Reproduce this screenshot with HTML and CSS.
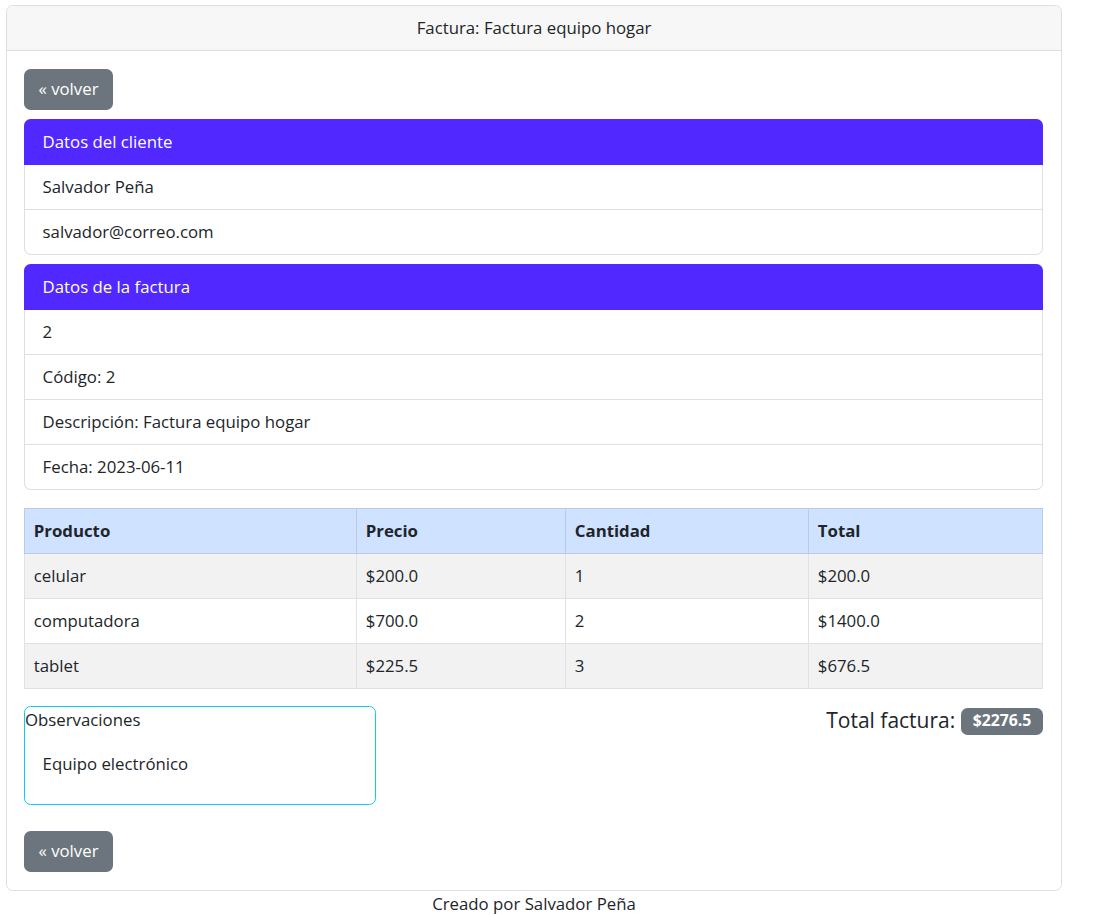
FILE: index.html
```html
<!DOCTYPE html>
<html lang="es">
<head>
<meta charset="utf-8">
<title>Factura</title>
<link rel="stylesheet" href="styles.css">
</head>
<body>
<div class="page">
  <div class="card main">
    <div class="card-header main-header">Factura: Factura equipo hogar</div>
    <div class="card-body main-body">
      <a class="btn" href="#">« volver</a>

      <div class="card info">
        <div class="info-header">Datos del cliente</div>
        <ul class="list">
          <li>Salvador Peña</li>
          <li>salvador@correo.com</li>
        </ul>
      </div>

      <div class="card info">
        <div class="info-header">Datos de la factura</div>
        <ul class="list">
          <li>2</li>
          <li>Código: 2</li>
          <li>Descripción: Factura equipo hogar</li>
          <li>Fecha: 2023-06-11</li>
        </ul>
      </div>

      <table class="items">
        <colgroup>
          <col class="c1">
          <col class="c2">
          <col class="c3">
          <col>
        </colgroup>
        <thead>
          <tr><th>Producto</th><th>Precio</th><th>Cantidad</th><th>Total</th></tr>
        </thead>
        <tbody>
          <tr><td>celular</td><td>$200.0</td><td>1</td><td>$200.0</td></tr>
          <tr><td>computadora</td><td>$700.0</td><td>2</td><td>$1400.0</td></tr>
          <tr><td>tablet</td><td>$225.5</td><td>3</td><td>$676.5</td></tr>
        </tbody>
      </table>

      <div class="summary">
        <div class="obs">
          <div class="obs-title">Observaciones</div>
          <div class="obs-body">Equipo electrónico</div>
        </div>
        <h5 class="total">Total factura: <span class="badge">$2276.5</span></h5>
      </div>

      <a class="btn" href="#">« volver</a>
    </div>
  </div>
  <p class="footer">Creado por Salvador Peña</p>
</div>
</body>
</html>
```

FILE: styles.css
```css
* { box-sizing: border-box; }

html, body {
  margin: 0;
  padding: 0;
}

body {
  font-family: "Open Sans", "Noto Sans", sans-serif;
  font-size: 16.8px;
  line-height: 26.4px;
  color: #212529;
  background: #fff;
}

.page {
  width: 1056px;
  margin-left: 6px;
  padding-top: 5px;
}

.card {
  border: 1px solid #dfdfdf;
  border-radius: 6.6px;
  background: #fff;
}

.main-header {
  background: #f7f7f7;
  border-bottom: 1px solid #dfdfdf;
  border-radius: 5.6px 5.6px 0 0;
  text-align: center;
  padding: 8.8px 17.6px;
  height: 45px;
}

.main-body {
  padding: 18px 17.6px 17.6px 17px;
}

.btn {
  display: block;
  width: 89px;
  height: 41px;
  padding: 7px 0;
  background: #6c757d;
  color: #fff;
  text-decoration: none;
  border-radius: 6.6px;
  text-align: center;
  white-space: nowrap;
}

.info {
  margin: 9px 0;
  border-top: none;
}

.info-header {
  background: #5128ff;
  color: #fff;
  margin: 0 -1px;
  padding: 9.5px 18.6px;
  height: 46px;
  border-radius: 6.6px 6.6px 0 0;
}

.list {
  list-style: none;
  margin: 0;
  padding: 0;
}

.list li {
  padding: 9.3px 17.6px;
  height: 45px;
  border-top: 1px solid #dfdfdf;
}

.list li:first-child {
  border-top: none;
  height: 44px;
  padding-top: 8.8px;
}

.items {
  width: 100%;
  border-collapse: collapse;
  margin-top: 18px;
  margin-bottom: 17px;
  table-layout: fixed;
}

.items .c1 { width: 332px; }
.items .c2 { width: 209px; }
.items .c3 { width: 243px; }

.items th,
.items td {
  text-align: left;
  padding: 8.8px;
  height: 45px;
  border: 1px solid #dee2e6;
}

.items thead th {
  background: #cfe2ff;
  border-color: #bacbe6;
  font-weight: 700;
}

.items tbody tr:nth-child(odd) td {
  background: #f2f2f2;
}

.summary {
  display: flex;
  justify-content: space-between;
  align-items: flex-start;
  margin-bottom: 26px;
}

.obs {
  width: 352px;
  height: 99px;
  border: 1px solid #0dcaf0;
  border-radius: 6.6px;
}

.obs-body {
  padding: 17.6px;
}

.total {
  margin: 0;
  font-size: 21px;
  font-weight: 400;
  line-height: 28px;
}

.badge {
  display: inline-block;
  background: #6c757d;
  color: #fff;
  font-size: 15.8px;
  font-weight: 700;
  line-height: 1;
  padding: 5.5px 12px 6px;
  border-radius: 6.6px;
  vertical-align: 2px;
}

.footer {
  margin: 0;
  text-align: center;
}
```
